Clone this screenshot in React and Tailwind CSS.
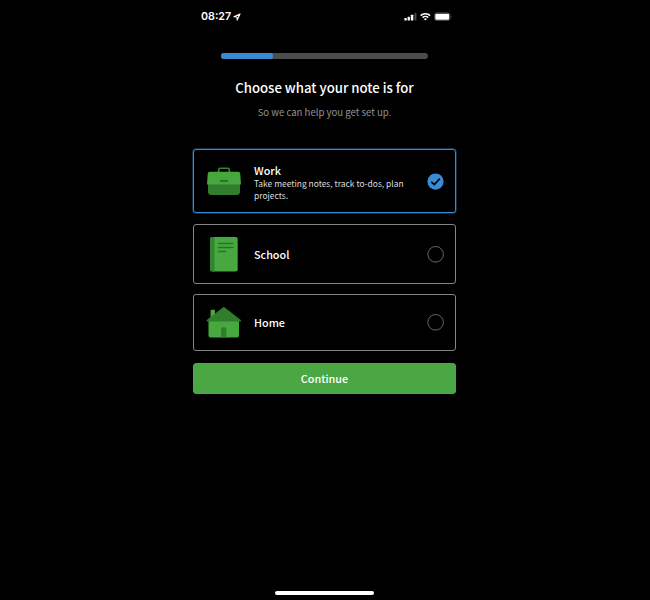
import React from "react";

function StatusBar() {
  return (
    <div className="flex h-[33px] items-center justify-between pt-px pl-2 pr-[4px]">
      <div className="flex items-center gap-[2px] pt-px font-['Inter','Liberation_Sans',sans-serif] text-[10.7px] leading-none font-semibold text-white">
        <span>08:27</span>
        <svg width="8" height="8" viewBox="0 0 8 8" fill="none" stroke="#fff" strokeWidth="1.1" strokeLinejoin="round">
          <path d="M7 0.9 L0.9 3.7 L3.9 4 L4.2 7.1 Z" />
        </svg>
      </div>
      <svg width="48" height="10" viewBox="0 0 48 10" fill="#fff">
        <rect x="0.4" y="6" width="2.3" height="2.5" rx="0.5" />
        <rect x="3.6" y="4.8" width="2.3" height="3.7" rx="0.5" />
        <rect x="6.8" y="2.8" width="2.5" height="5.7" rx="0.5" />
        <rect x="10.4" y="1" width="2" height="7.5" rx="0.5" fill="#484848" />
        <g fill="none" stroke="#fff" strokeWidth="1.5">
          <path d="M16.6 3.6 A7 7 0 0 1 26.2 3.6" />
          <path d="M18.6 5.6 A4 4 0 0 1 24.2 5.6" />
        </g>
        <path d="M19.8 6.9 A2.3 2.3 0 0 1 23 6.9 L21.4 8.6 Z" />
        <rect x="30.5" y="0.9" width="15.5" height="7.6" rx="2" fill="none" stroke="#555" strokeWidth="0.8" />
        <rect x="31.3" y="1.7" width="13.9" height="6" rx="1" />
        <path d="M46.9 3.4 Q48 4.7 46.9 6 Z" fill="#777" />
      </svg>
    </div>
  );
}

function BriefcaseIcon() {
  return (
    <svg className="shrink-0" width="36" height="36" viewBox="0 0 36 36">
      <path d="M12.7 8 V5.8 Q12.7 4.2 14.3 4.2 H21.7 Q23.3 4.2 23.3 5.8 V8" fill="none" stroke="#398735" strokeWidth="1.6" />
      <path d="M2 18 H34 V27.5 Q34 31 30.5 31 H5.5 Q2 31 2 27.5 Z" fill="#317d2e" />
      <path d="M4 7.8 H32 Q34.2 7.8 34.3 10 L35 20.6 H1 L1.7 10 Q1.8 7.8 4 7.8 Z" fill="#45a83d" />
      <rect x="14" y="16" width="8" height="1.8" rx="0.9" fill="#286d25" />
    </svg>
  );
}

function NotebookIcon() {
  return (
    <svg className="shrink-0" width="36" height="36" viewBox="0 0 36 36">
      <rect x="4.1" y="1" width="27.6" height="34.4" rx="2" fill="#47a83f" />
      <path d="M6.1 1 H8.5 V35.4 H6.1 Q4.1 35.4 4.1 33.4 V3 Q4.1 1 6.1 1 Z" fill="#318530" />
      <g stroke="#2c702a" strokeWidth="1.5" strokeLinecap="round">
        <path d="M12.6 7.4 H27 M12.6 11.4 H27 M12.6 15.4 H19.4" />
      </g>
    </svg>
  );
}

function HouseIcon() {
  return (
    <svg className="shrink-0" width="36" height="36" viewBox="0 0 36 36">
      <rect x="4.6" y="5.8" width="4.4" height="9" rx="0.8" fill="#47a83f" />
      <path d="M2.5 15 H33 V31.4 Q33 33.4 31 33.4 H4.5 Q2.5 33.4 2.5 31.4 Z" fill="#47a83f" />
      <path d="M16.8 3.4 Q17.8 2.6 18.8 3.4 L34.8 15.9 Q35.4 17.5 34.3 17.5 H1.3 Q0.2 17.5 0.8 15.9 Z" fill="#317d2e" />
      <path d="M15.1 33.4 V25.7 A2.6 2.6 0 0 1 20.3 25.7 V33.4 Z" fill="#317d2e" />
    </svg>
  );
}

function Radio({ checked }) {
  return (
    <svg className="shrink-0" width="18" height="18" viewBox="0 0 18 18" fill="none">
      {checked ? (
        <>
          <circle cx="8.5" cy="8.6" r="8.1" fill="#3a8bd3" />
          <path d="M4.3 8.8 L7.3 11.6 L12.8 5.6" stroke="#000" strokeWidth="1.6" />
        </>
      ) : (
        <circle cx="8.6" cy="9.3" r="7.8" stroke="#686868" strokeWidth="1" />
      )}
    </svg>
  );
}

function Option({ icon, title, detail, checked, className }) {
  return (
    <div className={`flex items-center rounded-[3px] border pr-[10px] pl-3 ${className}`}>
      {icon}
      <div className="ml-[12px] flex-1 text-white">
        <div className="text-[10.8px] leading-[14px] font-medium">{title}</div>
        {detail && <div className="w-[160px] text-[8.45px] leading-[12px] text-[#dedede]">{detail}</div>}
      </div>
      <Radio checked={checked} />
    </div>
  );
}

export default function App() {
  return (
    <div className="flex h-[600px] w-[650px] bg-black pl-[193px] font-['Noto_Sans_CJK_SC','Noto_Sans',sans-serif]">
      <div className="flex w-[263px] flex-col">
        <StatusBar />
        <div className="mt-5 ml-7 h-[6px] w-[207px] overflow-hidden rounded-full bg-[#4c4c4c]">
          <div className="h-full w-[52px] rounded-r-[2px] bg-[#3a8bd3]" />
        </div>
        <h1 className="mt-[19px] text-center text-[13.2px] leading-5 font-medium whitespace-nowrap text-white">Choose what your note is for</h1>
        <p className="mt-[6px] text-center text-[9.6px] leading-4 text-[#949494]">So we can help you get set up.</p>
        <Option className="mt-[29px] h-[64px] border-[#3a8bd3] pt-[2px] shadow-[0_0_0_0.5px_#235d90]" icon={<BriefcaseIcon />} title="Work" detail="Take meeting notes, track to-dos, plan projects." checked />
        <Option className="mt-[11px] h-[60px] border-[#858585]" icon={<NotebookIcon />} title="School" />
        <Option className="mt-[10px] h-[57px] border-[#858585] pb-px" icon={<HouseIcon />} title="Home" />
        <button className="mt-3 h-[31px] rounded-[3px] border border-[#42b13a] bg-[#4ba743] text-[10.8px] leading-none font-medium text-white">Continue</button>
        <div className="mt-auto mb-[5px] h-[4px] w-[99px] self-center rounded-full bg-white" />
      </div>
    </div>
  );
}
